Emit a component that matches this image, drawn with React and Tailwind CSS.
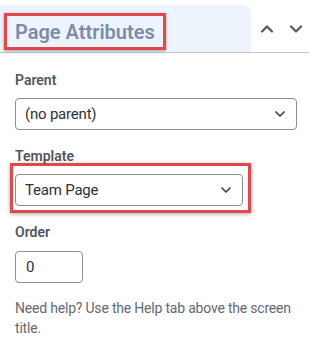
// Page Attributes sidebar panel (block editor style), with two red highlight callouts.
function Chevron({ up = false, className = '' }) {
  return (
    <svg viewBox="0 0 24 24" className={className} fill="none" stroke="currentColor" strokeWidth="2.6" strokeLinecap="round" strokeLinejoin="round">
      <path d={up ? 'M6 15l6-6 6 6' : 'M6 9l6 6 6-6'} />
    </svg>
  );
}

function Select({ value, className = '' }) {
  return (
    <div className={`flex h-8 items-center justify-between rounded border border-[#8c8f94] bg-white pl-[9px] pr-[8px] ${className}`}>
      <span className="text-[15px] tracking-[-0.2px] text-[#2c3338]">{value}</span>
      <Chevron className="h-4 w-4 text-[#3c434a]" />
    </div>
  );
}

export default function App() {
  return (
    <div className="h-[353px] w-[329px] overflow-hidden bg-white" style={{ fontFamily: 'Roboto, "Noto Sans", sans-serif' }}>
      <div className="flex h-[53px] w-[309px] items-end border-b border-[#c3c4c7] pt-[5px]">
        <div className="flex h-[47px] w-[251px] items-start rounded-tr-lg bg-[#eef4fb] pt-[8px]">
          <div className="ml-[4px] flex h-[37px] items-center border-[3px] border-[#e0484b] px-[8px] shadow-[0_1px_3px_rgba(0,0,0,0.35)]">
            <span className="text-[20px] font-semibold text-[#7b8cab]">Page Attributes</span>
          </div>
        </div>
        <div className="flex h-[47px] items-center gap-[9px] pl-[6px]">
          <Chevron up className="h-5 w-5 text-[#50575e]" />
          <Chevron className="h-5 w-5 text-[#50575e]" />
        </div>
      </div>

      <div className="px-[15px]">
        <div className="mt-[17px] text-[14px] leading-[20px] font-semibold text-[#50575e]">Parent</div>
        <Select value="(no parent)" className="mt-[8px] w-[282px]" />

        <div className="mt-[16px] text-[14px] leading-[20px] font-semibold text-[#50575e]">Template</div>
        <div className="-ml-[5px] -mt-[3px] w-[241px] border-[3px] border-[#e0484b] pb-[4px] pl-[2px] pr-[5px] pt-[8px] shadow-[0_1px_4px_rgba(0,0,0,0.35)]">
          <Select value="Team Page" />
        </div>

        <div className="mt-[9px] text-[14px] leading-[20px] font-semibold text-[#50575e]">Order</div>
        <div className="mt-[9px] flex h-8 w-[68px] items-center rounded border border-[#8c8f94] pl-[10px] text-[15px] text-[#2c3338]">0</div>

        <p className="mt-[15px] w-[295px] text-[14px] leading-[20px] tracking-[-0.2px] text-[#646970]">
          Need help? Use the Help tab above the screen title.
        </p>
      </div>
    </div>
  );
}
